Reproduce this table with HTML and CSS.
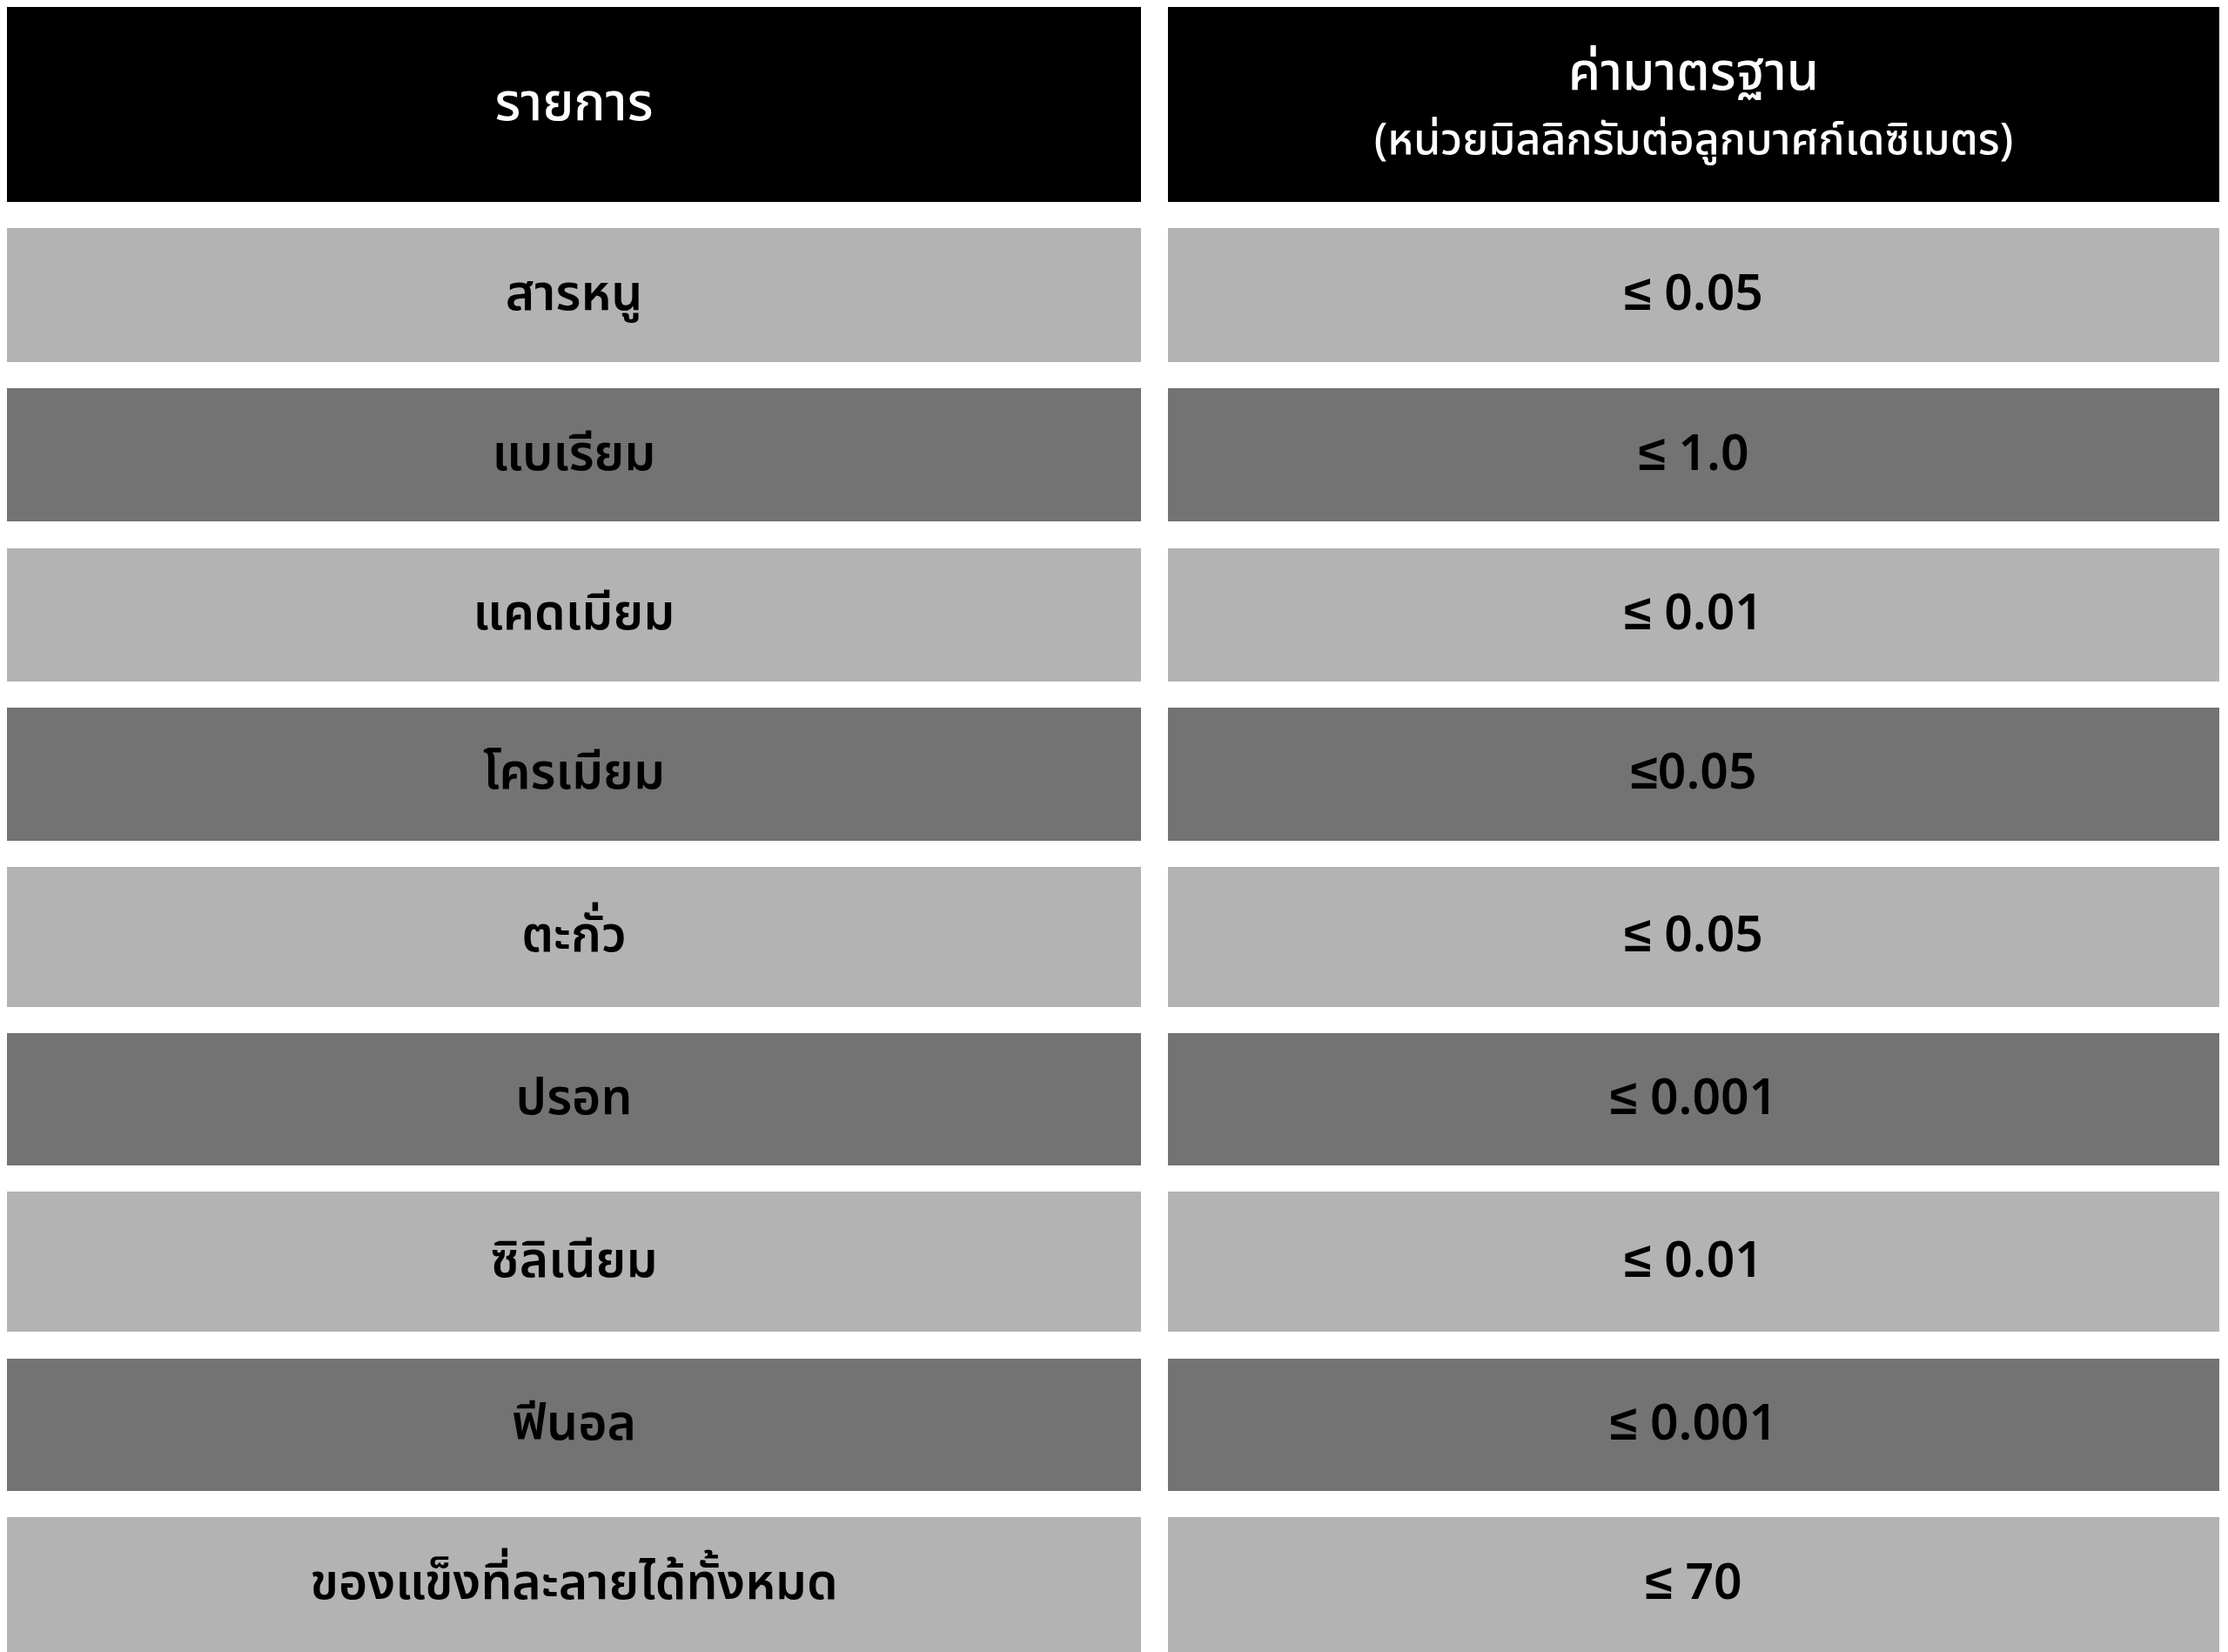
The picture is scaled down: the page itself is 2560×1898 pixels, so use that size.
FILE: index.html
```html
<!DOCTYPE html>
<html lang="th">
<head>
<meta charset="utf-8">
<title>ค่ามาตรฐาน</title>
<link rel="stylesheet" href="styles.css">
</head>
<body>
<div class="table">
  <div class="cell head"><span class="h1">รายการ</span></div>
  <div class="cell head"><span class="h1">ค่ามาตรฐาน</span><span class="h2">(หน่วยมิลลิกรัมต่อลูกบาศก์เดซิเมตร)</span></div>

  <div class="cell light">สารหนู</div>
  <div class="cell light">≤ 0.05</div>

  <div class="cell dark">แบเรียม</div>
  <div class="cell dark">≤ 1.0</div>

  <div class="cell light">แคดเมียม</div>
  <div class="cell light">≤ 0.01</div>

  <div class="cell dark">โครเมียม</div>
  <div class="cell dark">≤0.05</div>

  <div class="cell light">ตะกั่ว</div>
  <div class="cell light">≤ 0.05</div>

  <div class="cell dark">ปรอท</div>
  <div class="cell dark">≤ 0.001</div>

  <div class="cell light">ซิลิเนียม</div>
  <div class="cell light">≤ 0.01</div>

  <div class="cell dark">ฟีนอล</div>
  <div class="cell dark">≤ 0.001</div>

  <div class="cell light">ของแข็งที่ละลายได้ทั้งหมด</div>
  <div class="cell light">≤ 70</div>
</div>
</body>
</html>
```

FILE: styles.css
```css
html, body {
  margin: 0;
  padding: 0;
  background: #ffffff;
}

body {
  padding: 8px 0 0 8px;
  font-family: "Noto Sans Thai", "Noto Sans", "Liberation Sans", sans-serif;
  overflow: hidden;
  height: 1898px;
  box-sizing: border-box;
}

.table {
  display: grid;
  grid-template-columns: 1303px 1208px;
  grid-template-rows: 224px 154px 153px 153px 153px 161px 152px 161px 152px 155px;
  column-gap: 31px;
  row-gap: 30.2px;
}

.cell {
  display: flex;
  align-items: center;
  justify-content: center;
  font-size: 57px;
  font-weight: 600;
  color: #000000;
}

.head {
  background: #000000;
  color: #ffffff;
  flex-direction: column;
  font-weight: 500;
}

.h1 {
  font-size: 60px;
  line-height: 1.4;
}

.h2 {
  font-size: 50px;
  line-height: 1.4;
}

.light {
  background: #b3b3b3;
}

.dark {
  background: #737373;
}
```
